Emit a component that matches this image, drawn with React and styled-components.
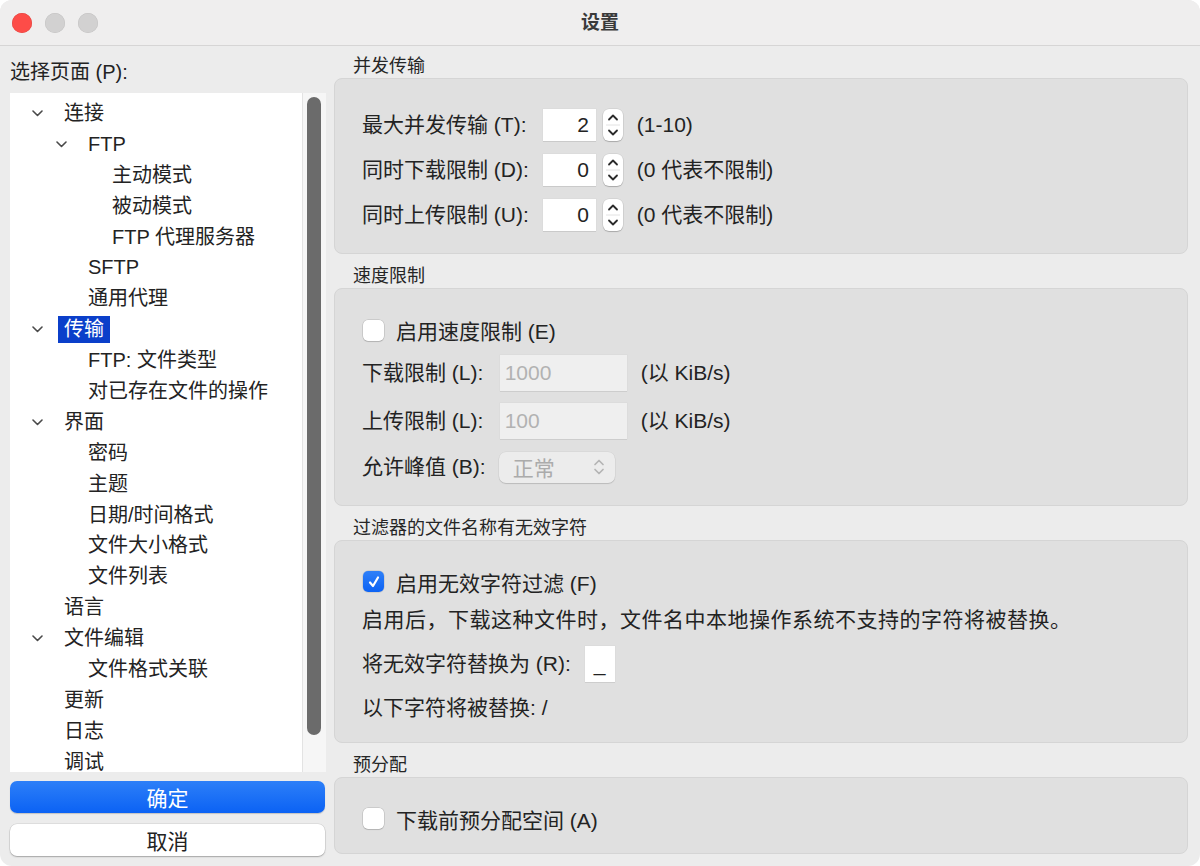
import styled, { createGlobalStyle } from "styled-components";

const GlobalStyle = createGlobalStyle`
  html, body {
    margin: 0;
    padding: 0;
    background: #fff;
  }
  body {
    font-family: "Liberation Sans", "Noto Sans CJK SC", sans-serif;
    color: #232323;
  }
  * {
    box-sizing: border-box;
  }
`;

const pages = [
  { label: "连接", level: 0, open: true },
  { label: "FTP", level: 1, open: true },
  { label: "主动模式", level: 2 },
  { label: "被动模式", level: 2 },
  { label: "FTP 代理服务器", level: 2 },
  { label: "SFTP", level: 1 },
  { label: "通用代理", level: 1 },
  { label: "传输", level: 0, open: true, selected: true },
  { label: "FTP: 文件类型", level: 1 },
  { label: "对已存在文件的操作", level: 1 },
  { label: "界面", level: 0, open: true },
  { label: "密码", level: 1 },
  { label: "主题", level: 1 },
  { label: "日期/时间格式", level: 1 },
  { label: "文件大小格式", level: 1 },
  { label: "文件列表", level: 1 },
  { label: "语言", level: 0 },
  { label: "文件编辑", level: 0, open: true },
  { label: "文件格式关联", level: 1 },
  { label: "更新", level: 0 },
  { label: "日志", level: 0 },
  { label: "调试", level: 0 },
];

function Chevron() {
  return (
    <svg width="11" height="7" viewBox="0 0 11 7">
      <polyline points="1,1 5.5,5.5 10,1" fill="none" stroke="#4a4a4a" strokeWidth="1.6" strokeLinecap="round" strokeLinejoin="round" />
    </svg>
  );
}

function Stepper() {
  return (
    <StepperBox>
      <svg width="20" height="32" viewBox="0 0 20 32">
        <polyline points="6,10.5 10,6.5 14,10.5" fill="none" stroke="#2b2b2b" strokeWidth="1.8" strokeLinecap="round" strokeLinejoin="round" />
        <line x1="3" y1="16" x2="17" y2="16" stroke="#e2e2e2" strokeWidth="1" />
        <polyline points="6,21.5 10,25.5 14,21.5" fill="none" stroke="#2b2b2b" strokeWidth="1.8" strokeLinecap="round" strokeLinejoin="round" />
      </svg>
    </StepperBox>
  );
}

function Check({ checked }) {
  return (
    <CheckBox $checked={checked}>
      {checked && (
        <svg width="14" height="14" viewBox="0 0 14 14">
          <polyline points="3,7.5 6,11 11,2.5" fill="none" stroke="#fff" strokeWidth="2.2" strokeLinecap="round" strokeLinejoin="round" />
        </svg>
      )}
    </CheckBox>
  );
}

export default function App() {
  return (
    <>
      <GlobalStyle />
      <Window>
        <TitleBar>
          <Lights>
            <Light $color="#fd4c48" $edge="#e0443f" />
            <Light $color="#d2d1d1" $edge="#c2c1c1" />
            <Light $color="#d2d1d1" $edge="#c2c1c1" />
          </Lights>
          <Title>设置</Title>
          <span />
        </TitleBar>

        <Body>
          <LeftPane>
            <PageLabel>选择页面 (P):</PageLabel>
            <TreeBox>
              <TreeList>
                {pages.map((p) => (
                  <TreeRow key={p.label} $level={p.level}>
                    <Toggle>{p.open && <Chevron />}</Toggle>
                    <TreeText $selected={p.selected}>{p.label}</TreeText>
                  </TreeRow>
                ))}
              </TreeList>
              <ScrollTrack>
                <Thumb />
              </ScrollTrack>
            </TreeBox>
            <OkButton>确定</OkButton>
            <CancelButton>取消</CancelButton>
          </LeftPane>

          <RightPane>
            <Group>
              <GroupTitle>并发传输</GroupTitle>
              <FormBox>
                <Label>最大并发传输 (T):</Label>
                <SpinGroup>
                  <NumberField>2</NumberField>
                  <Stepper />
                </SpinGroup>
                <Note>(1-10)</Note>
                <Label>同时下载限制 (D):</Label>
                <SpinGroup>
                  <NumberField>0</NumberField>
                  <Stepper />
                </SpinGroup>
                <Note>(0 代表不限制)</Note>
                <Label>同时上传限制 (U):</Label>
                <SpinGroup>
                  <NumberField>0</NumberField>
                  <Stepper />
                </SpinGroup>
                <Note>(0 代表不限制)</Note>
              </FormBox>
            </Group>

            <Group>
              <GroupTitle>速度限制</GroupTitle>
              <FormBox $rowGap="12.5px" $top="29px">
                <CheckRow $span>
                  <Check />
                  <span>启用速度限制 (E)</span>
                </CheckRow>
                <Label>下载限制 (L):</Label>
                <TextField $disabled>1000</TextField>
                <Note>(以 KiB/s)</Note>
                <Label>上传限制 (L):</Label>
                <TextField $disabled>100</TextField>
                <Note>(以 KiB/s)</Note>
                <Label>允许峰值 (B):</Label>
                <Select>
                  <span>正常</span>
                  <svg width="12" height="20" viewBox="0 0 12 20">
                    <polyline points="2,7.5 6,3.5 10,7.5" fill="none" stroke="#b4b4b4" strokeWidth="1.7" strokeLinecap="round" strokeLinejoin="round" />
                    <polyline points="2,12.5 6,16.5 10,12.5" fill="none" stroke="#b4b4b4" strokeWidth="1.7" strokeLinecap="round" strokeLinejoin="round" />
                  </svg>
                </Select>
                <span />
              </FormBox>
            </Group>

            <Group>
              <GroupTitle>过滤器的文件名称有无效字符</GroupTitle>
              <StackBox>
                <CheckRow>
                  <Check checked />
                  <span>启用无效字符过滤 (F)</span>
                </CheckRow>
                <Line $wide>启用后，下载这种文件时，文件名中本地操作系统不支持的字符将被替换。</Line>
                <InlineRow>
                  <Label>将无效字符替换为 (R):</Label>
                  <TextField $width="30px">_</TextField>
                </InlineRow>
                <Line>以下字符将被替换: /</Line>
              </StackBox>
            </Group>

            <Group>
              <GroupTitle>预分配</GroupTitle>
              <StackBox>
                <CheckRow>
                  <Check />
                  <span>下载前预分配空间 (A)</span>
                </CheckRow>
              </StackBox>
            </Group>
          </RightPane>
        </Body>
      </Window>
    </>
  );
}

const Window = styled.div`
  width: 1200px;
  height: 866px;
  border-radius: 12px;
  overflow: hidden;
  background: #ececec;
  display: flex;
  flex-direction: column;
`;

const TitleBar = styled.div`
  height: 46px;
  flex: none;
  display: grid;
  grid-template-columns: 1fr auto 1fr;
  align-items: center;
  background: #efeeee;
  border-bottom: 1.5px solid #d6d5d5;
`;

const Lights = styled.div`
  display: flex;
  gap: 13px;
  padding-left: 12px;
  padding-top: 1px;
`;

const Light = styled.span`
  width: 20px;
  height: 20px;
  border-radius: 50%;
  background: ${(p) => p.$color};
  box-shadow: inset 0 0 0 0.5px ${(p) => p.$edge};
`;

const Title = styled.div`
  font-size: 19px;
  font-weight: 700;
  color: #3a3a3a;
  line-height: 1;
`;

const Body = styled.div`
  flex: 1;
  min-height: 0;
  display: flex;
  gap: 8px;
  padding: 0 12px 10px 10px;
`;

const LeftPane = styled.div`
  width: 316px;
  flex: none;
  display: flex;
  flex-direction: column;
`;

const PageLabel = styled.div`
  height: 47px;
  display: flex;
  align-items: center;
  font-size: 20px;
  padding-top: 2px;
`;

const TreeBox = styled.div`
  flex: 1;
  min-height: 0;
  display: flex;
`;

const TreeList = styled.div`
  flex: 1;
  background: #fff;
  overflow: hidden;
  padding-top: 5px;
`;

const TreeRow = styled.div`
  height: 30.9px;
  display: flex;
  align-items: center;
  padding-left: ${(p) => 12 + p.$level * 24}px;
  font-size: 20px;
  white-space: nowrap;
`;

const Toggle = styled.span`
  width: 30px;
  margin-right: 12px;
  display: flex;
  justify-content: center;
  align-items: center;
`;

const TreeText = styled.span`
  line-height: 27px;
  padding: 0 6px;
  margin-left: -6px;
  background: ${(p) => (p.$selected ? "#0b3fca" : "transparent")};
  color: ${(p) => (p.$selected ? "#fff" : "inherit")};
`;

const ScrollTrack = styled.div`
  width: 24px;
  background: #f6f6f6;
  border-left: 1px solid #e3e3e3;
  padding: 4px 0 0 4px;
`;

const Thumb = styled.div`
  width: 14px;
  height: 638px;
  border-radius: 7px;
  background: #6b6b6b;
`;

const ButtonBase = styled.button`
  height: 32px;
  border: none;
  border-radius: 7px;
  font-family: inherit;
  font-size: 21px;
  display: flex;
  align-items: center;
  justify-content: center;
  padding: 0;
`;

const OkButton = styled(ButtonBase)`
  margin-top: 9px;
  width: 315px;
  color: #fff;
  background: linear-gradient(#2d7ff8, #0b62f4);
  box-shadow: 0 1px 1px rgba(0, 0, 0, 0.18);
`;

const CancelButton = styled(ButtonBase)`
  margin-top: 11px;
  width: 315px;
  color: #222;
  background: #fff;
  box-shadow: 0 0 0 0.5px rgba(0, 0, 0, 0.12), 0 1px 1.5px rgba(0, 0, 0, 0.25);
`;

const RightPane = styled.div`
  flex: 1;
  display: flex;
  flex-direction: column;
  gap: 11px;
  padding-top: 9px;
`;

const Group = styled.section`
  display: flex;
  flex-direction: column;
`;

const GroupTitle = styled.div`
  height: 23px;
  line-height: 23px;
  padding-left: 19px;
  font-size: 18px;
  color: #262626;
`;

const Box = styled.div`
  background: #e0e0e0;
  border: 1px solid #d5d5d5;
  border-radius: 8px;
  padding: 29px 27px 22px;
  font-size: 21px;
`;

const FormBox = styled(Box)`
  display: grid;
  grid-template-columns: max-content max-content 1fr;
  column-gap: 14px;
  row-gap: ${(p) => p.$rowGap || "13px"};
  align-items: center;
  padding-top: ${(p) => p.$top || "30px"};
  padding-bottom: 22px;
`;

const StackBox = styled(Box)`
  display: flex;
  flex-direction: column;
  gap: 14px;
`;

const Label = styled.span`
  white-space: nowrap;
  line-height: 24px;
`;

const Note = styled.span`
  white-space: nowrap;
  line-height: 24px;
`;

const Line = styled.div`
  line-height: 24px;
  white-space: nowrap;
  letter-spacing: ${(p) => (p.$wide ? "0.5px" : "normal")};
`;

const SpinGroup = styled.div`
  display: flex;
  align-items: center;
  gap: 7px;
`;

const NumberField = styled.div`
  width: 53px;
  height: 32px;
  background: #fff;
  box-shadow: 0 0 0 0.5px #d8d8d8, 0 1px 0 #bdbdbd;
  display: flex;
  align-items: center;
  justify-content: flex-end;
  padding-right: 7px;
`;

const StepperBox = styled.div`
  width: 20px;
  height: 32px;
  background: #fff;
  border-radius: 6px;
  box-shadow: 0 0 0 0.5px rgba(0, 0, 0, 0.1), 0 1px 1px rgba(0, 0, 0, 0.2);
  display: flex;
`;

const TextField = styled.div`
  width: ${(p) => p.$width || "127px"};
  height: 36px;
  background: ${(p) => (p.$disabled ? "#efefef" : "#fff")};
  color: ${(p) => (p.$disabled ? "#b2b2b2" : "#222")};
  box-shadow: 0 0 0 0.5px #d8d8d8, 0 1px 0 #c2c2c2;
  display: flex;
  align-items: center;
  padding-left: ${(p) => (p.$width ? "9px" : "5px")};
`;

const Select = styled.div`
  width: 116px;
  height: 31px;
  border-radius: 7px;
  background: #ececec;
  color: #ababab;
  box-shadow: 0 0 0 0.5px rgba(0, 0, 0, 0.06), 0 1px 1px rgba(0, 0, 0, 0.14);
  display: flex;
  align-items: center;
  justify-content: space-between;
  padding: 0 10px 0 14px;
  margin-left: -1px;
`;

const CheckRow = styled.div`
  display: flex;
  align-items: center;
  gap: 12px;
  height: 24px;
  white-space: nowrap;
  ${(p) => p.$span && "grid-column: 1 / -1;"}
`;

const CheckBox = styled.span`
  width: 21px;
  height: 21px;
  border-radius: 5px;
  margin-left: 1px;
  flex: none;
  display: flex;
  align-items: center;
  justify-content: center;
  background: ${(p) => (p.$checked ? "linear-gradient(#2f80f8, #0d63f4)" : "#fff")};
  box-shadow: ${(p) =>
    p.$checked
      ? "0 0 0 0.5px rgba(0,0,0,0.15)"
      : "0 0 0 0.5px rgba(0,0,0,0.18), 0 1px 1px rgba(0,0,0,0.12)"};
`;

const InlineRow = styled.div`
  display: flex;
  align-items: center;
  gap: 14px;
`;
